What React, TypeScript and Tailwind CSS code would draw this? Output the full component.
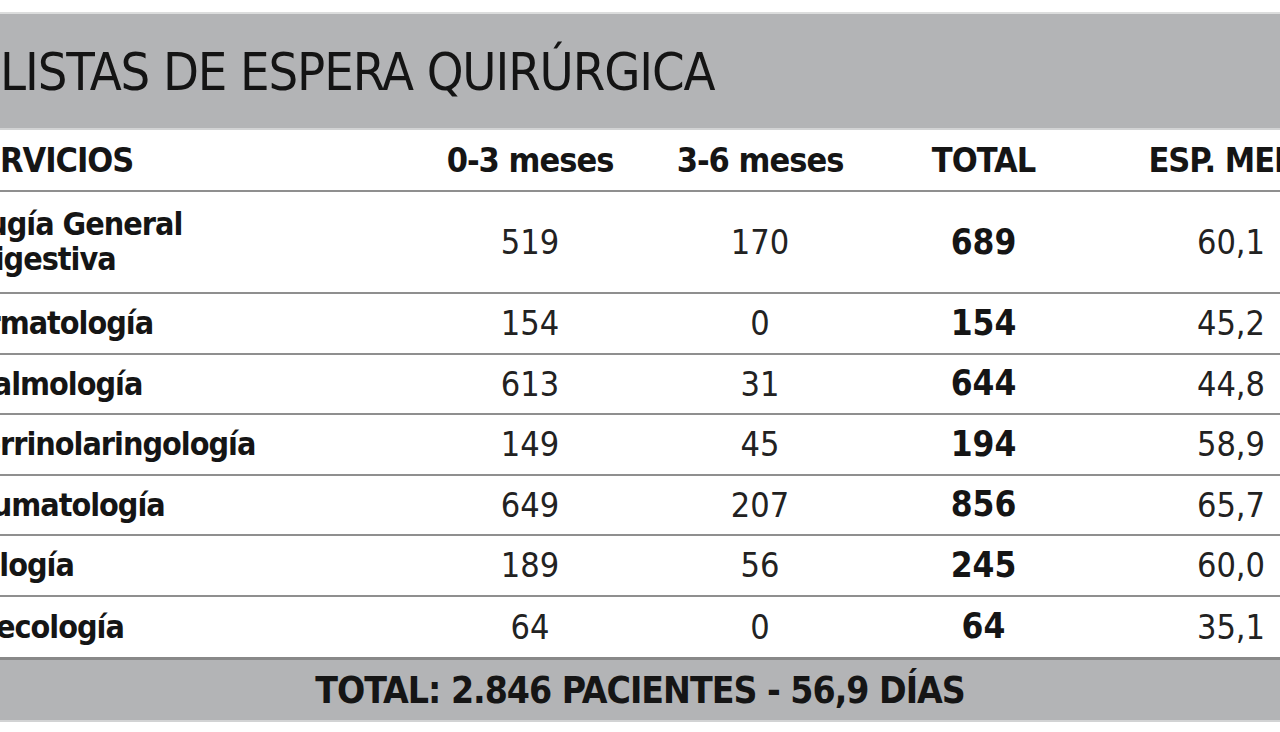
import React from "react";

const rows: { name: React.ReactNode; a: string; b: string; t: string; e: string; tall?: boolean }[] = [
  { name: (<span className="block leading-[35px]">Cirugía General<br />y Digestiva</span>), a: "519", b: "170", t: "689", e: "60,1", tall: true },
  { name: "Dermatología", a: "154", b: "0", t: "154", e: "45,2" },
  { name: "Oftalmología", a: "613", b: "31", t: "644", e: "44,8" },
  { name: "Otorrinolaringología", a: "149", b: "45", t: "194", e: "58,9" },
  { name: "Traumatología", a: "649", b: "207", t: "856", e: "65,7" },
  { name: "Urología", a: "189", b: "56", t: "245", e: "60,0" },
  { name: "Ginecología", a: "64", b: "0", t: "64", e: "35,1" },
];

const font = { fontFamily: '"DejaVu Sans Condensed", "DejaVu Sans", sans-serif' };

export default function App() {
  return (
    <div className="w-[1280px] h-[732px] overflow-hidden bg-white flex flex-col text-[#151515]" style={font}>
      <div className="mt-[12px] border-t-2 border-[#dcdddd] h-[118px] bg-[#b3b4b6] border-b-2 border-b-[#d2d3d4] flex items-center pl-[0px]">
        <h1 className="text-[52px] font-normal leading-none tracking-[-1.1px] text-[#141414] pt-[2px]">LISTAS DE ESPERA QUIRÚRGICA</h1>
      </div>
      <div className="ml-[-55px] w-[1440px] flex flex-col">
        <div className="grid grid-cols-[470px_230px_230px_217px_296px] h-[62px] border-b-2 border-[#8f8f8f] items-center font-bold text-[34px] tracking-[-1px] leading-none">
          <div className="pl-[14px]">SERVICIOS</div>
          <div className="text-center">0-3 meses</div>
          <div className="text-center">3-6 meses</div>
          <div className="text-center">TOTAL</div>
          <div className="text-center">ESP. MEDIA</div>
        </div>
        {rows.map((r, i) => (
          <div
            key={i}
            className={`grid grid-cols-[470px_230px_230px_217px_278px] items-center leading-none ${r.tall ? "h-[102px]" : "h-[60.5px]"} ${i < rows.length - 1 ? "border-b-2 border-[#8f8f8f]" : ""}`}
          >
            <div className="font-bold text-[32px] tracking-[-1px]">{r.name}</div>
            <div className="text-center text-[34px] text-[#222]">{r.a}</div>
            <div className="text-center text-[34px] text-[#222]">{r.b}</div>
            <div className="text-center font-bold text-[35px] tracking-[0px]">{r.t}</div>
            <div className="text-center text-[34px] text-[#222]">{r.e}</div>
          </div>
        ))}
      </div>
      <div className="h-[65px] border-t-[3px] border-[#898989] bg-[#b3b4b6] border-b-2 border-b-[#d2d3d4] flex items-center justify-center">
        <div className="font-bold text-[37px] tracking-[-1px] leading-none">TOTAL: 2.846 PACIENTES - 56,9 DÍAS</div>
      </div>
    </div>
  );
}
